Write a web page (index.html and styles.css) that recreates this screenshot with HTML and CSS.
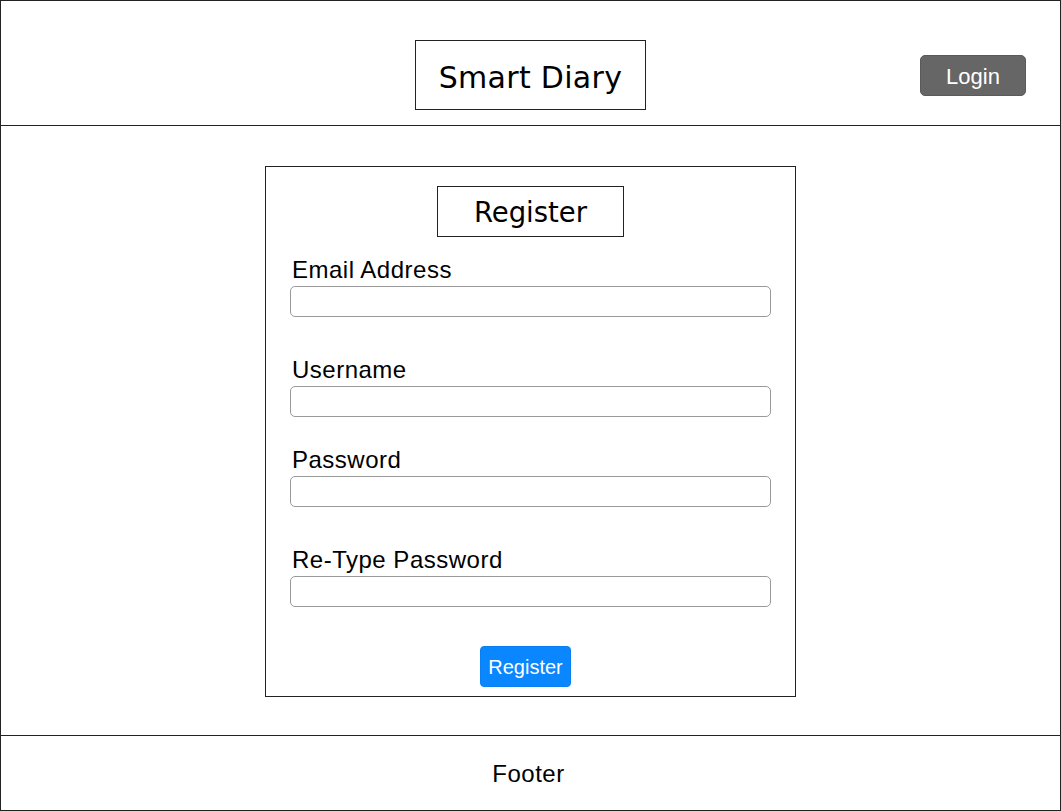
FILE: index.html
```html
<!DOCTYPE html>
<html>
<head>
<meta charset="utf-8">
<title>Smart Diary</title>
<link rel="stylesheet" href="styles.css">
</head>
<body>
<div class="frame">
  <header class="header">
    <div class="spacer"></div>
    <div class="title-box">Smart Diary</div>
    <div class="header-right"><button class="btn-login">Login</button></div>
  </header>
  <main class="main">
    <form class="card">
      <div class="card-title-row"><div class="card-title">Register</div></div>
      <div class="field field-email">
        <label class="label">Email Address</label>
        <input class="input" type="text">
      </div>
      <div class="field field-username">
        <label class="label">Username</label>
        <input class="input" type="text">
      </div>
      <div class="field field-password">
        <label class="label">Password</label>
        <input class="input" type="password">
      </div>
      <div class="field field-retype">
        <label class="label">Re-Type Password</label>
        <input class="input" type="password">
      </div>
      <div class="actions"><button type="button" class="btn-register">Register</button></div>
    </form>
  </main>
  <footer class="footer">Footer</footer>
</div>
</body>
</html>
```

FILE: styles.css
```css
* { box-sizing: border-box; }
html, body { margin: 0; padding: 0; background: #fff; }
body { font-family: "Liberation Sans", Arial, sans-serif; color: #000; }

.frame {
  width: 1061px;
  height: 811px;
  border: 1px solid #222;
  display: flex;
  flex-direction: column;
}

.header {
  height: 125px;
  border-bottom: 1px solid #222;
  display: grid;
  grid-template-columns: 1fr auto 1fr;
  align-items: start;
  padding-top: 39px;
}

.title-box {
  width: 231px;
  height: 70px;
  border: 1px solid #222;
  display: flex;
  align-items: center;
  justify-content: center;
  font-family: "DejaVu Sans", sans-serif;
  font-size: 30px;
  letter-spacing: 0.3px;
  padding-top: 4px;
}

.header-right {
  display: flex;
  justify-content: flex-end;
  padding-top: 15px;
  padding-right: 34px;
}

.btn-login {
  width: 106px;
  height: 41px;
  background: #666;
  color: #fff;
  border: 1px solid #5a5a5a;
  border-radius: 5px;
  font-family: "Liberation Sans", Arial, sans-serif;
  font-size: 22px;
  padding: 2px 0 0;
}

.main {
  flex: 1;
  display: flex;
  justify-content: center;
  align-items: flex-start;
  padding-top: 40px;
}

.card {
  width: 531px;
  height: 531px;
  border: 1px solid #222;
  padding: 19px 24px 0;
  display: flex;
  flex-direction: column;
}

.card-title-row { display: flex; justify-content: center; }

.card-title {
  width: 187px;
  height: 51px;
  border: 1px solid #222;
  display: flex;
  align-items: center;
  justify-content: center;
  font-family: "DejaVu Sans", sans-serif;
  font-size: 27.5px;
  padding-top: 1px;
}

.field { display: flex; flex-direction: column; }
.field-email { margin-top: 17px; }
.field-username { margin-top: 37px; }
.field-password { margin-top: 27px; }
.field-retype { margin-top: 37px; }

.label {
  font-size: 24px;
  letter-spacing: 0.5px;
  line-height: 32px;
  padding-left: 2px;
  height: 32px;
}

.input {
  width: 481px;
  height: 31px;
  border: 1px solid #999;
  border-radius: 5px;
  background: #fff;
  margin: 0;
  padding: 0 8px;
}

.actions {
  display: flex;
  justify-content: center;
  margin-top: 39px;
  padding-right: 10px;
}

.btn-register {
  width: 91px;
  height: 41px;
  background: #0a86ff;
  color: #fff;
  border: 1px solid #0a80f0;
  border-radius: 4px;
  font-family: "Liberation Sans", Arial, sans-serif;
  font-size: 20px;
  padding: 2px 0 0;
}

.footer {
  height: 75px;
  border-top: 1px solid #222;
  display: flex;
  align-items: center;
  justify-content: center;
  font-size: 24px;
  letter-spacing: 0.5px;
  padding-top: 2px;
  padding-right: 4px;
}
```
